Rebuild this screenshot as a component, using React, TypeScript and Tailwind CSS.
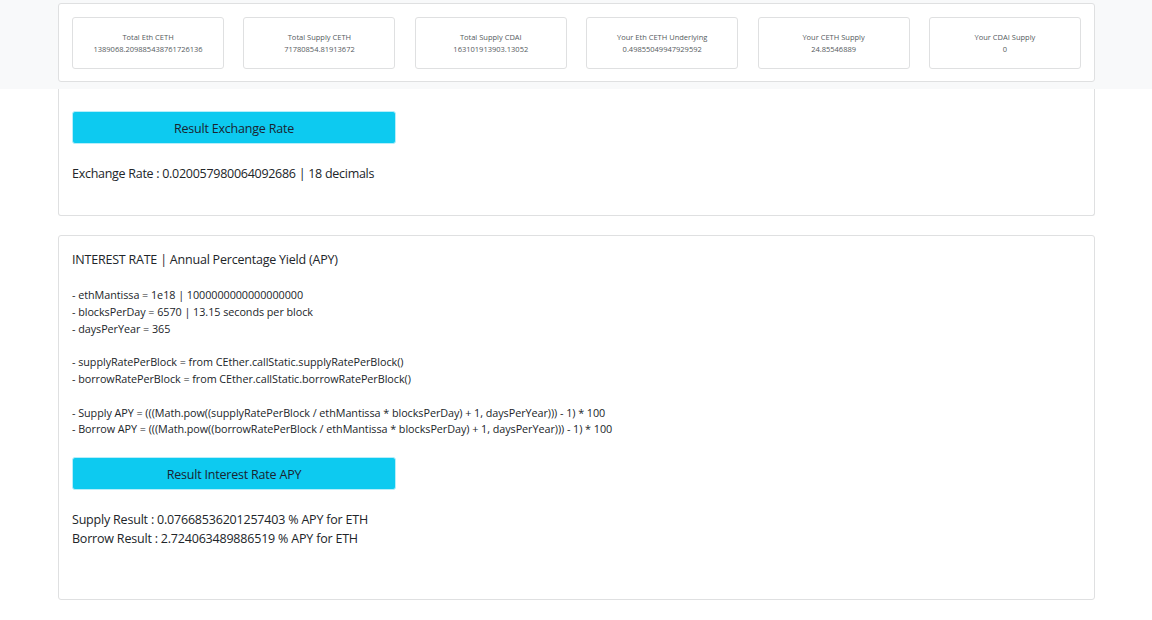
const font = { fontFamily: '"Open Sans", "Noto Sans", sans-serif' };

const stats = [
  { label: "Total Eth CETH", value: "1389068.209885438761726136" },
  { label: "Total Supply CETH", value: "71780854.81913672" },
  { label: "Total Supply CDAI", value: "163101913903.13052" },
  { label: "Your Eth CETH Underlying", value: "0.49855049947929592" },
  { label: "Your CETH Supply", value: "24.85546889" },
  { label: "Your CDAI Supply", value: "0" },
];

const formula = [
  "- ethMantissa = 1e18 | 1000000000000000000",
  "- blocksPerDay = 6570 | 13.15 seconds per block",
  "- daysPerYear = 365",
  "",
  "- supplyRatePerBlock = from CEther.callStatic.supplyRatePerBlock()",
  "- borrowRatePerBlock = from CEther.callStatic.borrowRatePerBlock()",
  "",
  "- Supply APY = (((Math.pow((supplyRatePerBlock / ethMantissa * blocksPerDay) + 1, daysPerYear))) - 1) * 100",
  "- Borrow APY = (((Math.pow((borrowRatePerBlock / ethMantissa * blocksPerDay) + 1, daysPerYear))) - 1) * 100",
];

const ResultButton = ({ label }: { label: string }) => (
  <button className="w-[324px] h-[33px] pt-[3px] rounded-[3px] border border-[#b6eefa] bg-[#0dcaf0] text-[12.5px] tracking-[-0.2px] text-[#1a2430]">
    {label}
  </button>
);

export default function App() {
  return (
    <div style={font} className="min-h-[620px] bg-white text-[#212529]">
      <div className="h-[89px] bg-[#f8f9fa] pl-[58px] pr-[57px] pt-[3px]">
        <div className="h-[79px] rounded-[3px] border border-[#dfe0e1] bg-white px-[13px] pt-[13px]">
          <div className="grid grid-cols-6 gap-[19.3px]">
            {stats.map((s) => (
              <div
                key={s.label}
                className="flex h-[52px] flex-col items-center justify-center rounded-[3px] border border-[#dfe0e1] text-center text-[7.5px] leading-[12px] text-[#555b60]"
              >
                <p>{s.label}</p>
                <p>{s.value}</p>
              </div>
            ))}
          </div>
        </div>
      </div>

      <div className="ml-[58px] mr-[57px] flex h-[127px] flex-col rounded-b-[3px] border-x border-b border-[#dfe0e1] px-[13px] pt-[22px]">
        <ResultButton label="Result Exchange Rate" />
        <p className="mt-[20px] text-[12.5px] leading-[19px] tracking-[-0.28px]">
          Exchange Rate : 0.020057980064092686 | 18 decimals
        </p>
      </div>

      <div className="ml-[58px] mr-[57px] mt-[19px] flex h-[365px] flex-col rounded-[3px] border border-[#dfe0e1] px-[13px] pt-[14px]">
        <p className="text-[12.5px] leading-[19px] tracking-[-0.21px]">
          INTEREST RATE | Annual Percentage Yield (APY)
        </p>
        <div className="mt-[17px] text-[10.8px] leading-[17px] tracking-[-0.05px]">
          {formula.map((line, i) => (
            <p key={i} className="h-[16.8px]">
              {line}
            </p>
          ))}
        </div>
        <div className="mt-[20px]">
          <ResultButton label="Result Interest Rate APY" />
        </div>
        <div className="mt-[21px] text-[12.5px] leading-[18.5px] tracking-[-0.2px]">
          <p>Supply Result : 0.07668536201257403 % APY for ETH</p>
          <p>Borrow Result : 2.724063489886519 % APY for ETH</p>
        </div>
      </div>
    </div>
  );
}
